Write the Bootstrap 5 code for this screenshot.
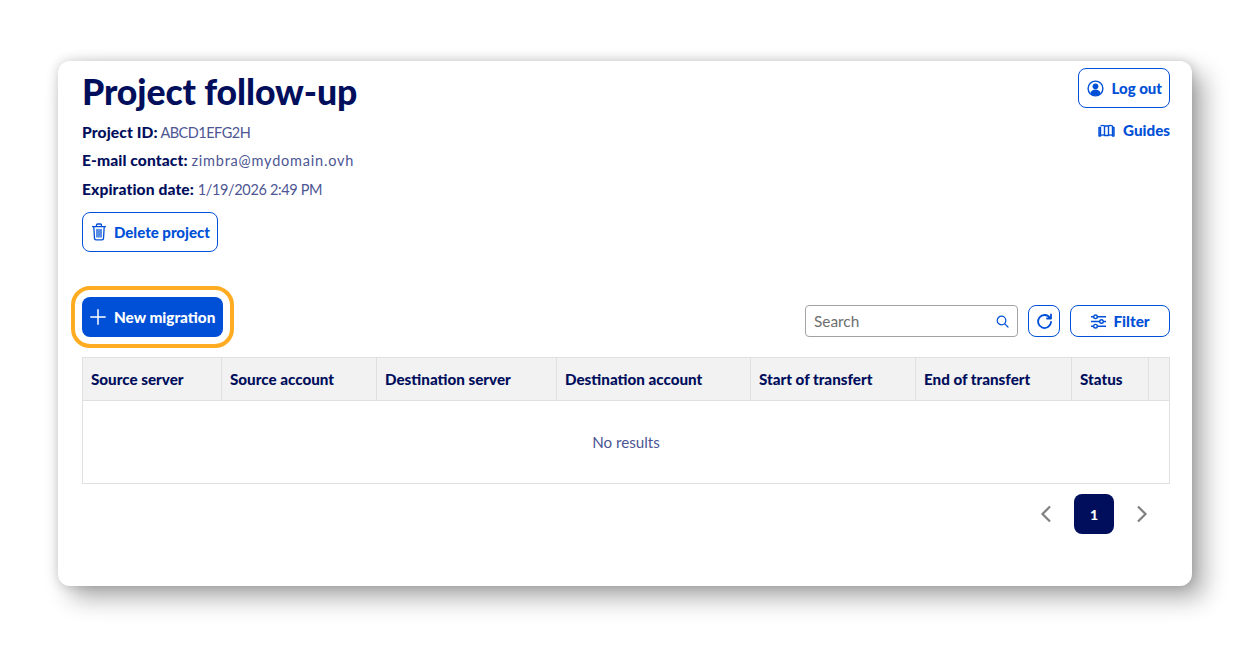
<!DOCTYPE html>
<html lang="en">
<head>
<meta charset="utf-8">
<title>Project follow-up</title>
<link href="https://cdn.jsdelivr.net/npm/bootstrap@5.3.0/dist/css/bootstrap.min.css" rel="stylesheet">
<style>
html,body{height:650px;overflow:hidden;background:#fff}
body{font-family:"Lato","Liberation Sans",sans-serif;font-size:14.5px;color:#4d5693;padding:61px 58px 64px}
.sheet{height:525px;background:#fff;border-radius:12px;box-shadow:12px 12px 24px rgba(0,0,0,.32),0 0 12px rgba(0,0,0,.18);padding:0 22px 0 24px}
.ttl{font-size:35.6px;font-weight:900;color:#000e5c;line-height:44px;margin:9px 0 0;letter-spacing:-.1px}
.infos{margin-top:4px}
.meta{margin:0;line-height:28.4px;height:28.4px;white-space:nowrap}
.meta b{color:#000e5c;font-weight:900;font-size:15.6px;letter-spacing:.1px}
.vid{letter-spacing:-.5px;margin-left:-1px}
.vmail{letter-spacing:.8px}
.vdate{letter-spacing:-.35px}
.oline{display:inline-flex;align-items:center;height:40px;border:1px solid #0050d7;border-radius:8px;color:#0050d7;font-weight:900;font-size:15px;background:#fff;padding:0 7px 0 8px;gap:7px;text-decoration:none}
.oline:hover{color:#0050d7;background:#fff}
.delb{margin-top:9px}
.logb{padding-right:7px;gap:8px}
.guide{display:flex;align-items:center;justify-content:flex-end;gap:8px;color:#0050d7;font-weight:900;font-size:15.2px;text-decoration:none;line-height:20px;margin-top:12px}
.newm{display:inline-flex;align-items:center;height:40px;width:141px;border:0;border-radius:8px;background:#0050d7;color:#fff;font-weight:900;font-size:15.3px;padding:0 0 0 8px;gap:8px;outline:4px solid #ffac22;outline-offset:7.5px}
.newm:hover{background:#0050d7;color:#fff}
.srch{width:213px;height:32px;border:1px solid #a3a3a3;border-radius:4px;padding:0 8px;color:#6e6e6e}
.srch span{font-size:15.4px}
.iconb{width:32px;height:32px;padding:0;justify-content:center}
.filt{width:100px;height:32px;justify-content:center;padding:0;gap:6px;font-size:15.3px}
.tools{gap:10px}
.grid{table-layout:fixed;width:1088px;border-collapse:collapse;margin:20px 0 0}
.grid th{height:43px;background:#f2f2f2;color:#000e5c;font-weight:900;font-size:15.2px;border:1px solid #e0e0e0;padding:0 8px;white-space:nowrap}
.grid td{height:83px;text-align:center;border:1px solid #e0e0e0;color:#4d5693;padding:0;font-size:15.2px}
.pgr{margin-top:10px;gap:18px;padding-right:22px}
.pg1{width:40px;height:40px;border-radius:8px;background:#000e5c;color:#fff;font-weight:900;font-size:14px;display:flex;align-items:center;justify-content:center}
.row2{margin-top:45px}
</style>
</head>
<body>
<main class="sheet">
  <div class="d-flex justify-content-between">
    <div>
      <h1 class="ttl">Project follow-up</h1>
      <div class="infos">
      <p class="meta"><b>Project ID:</b> <span class="vid">ABCD1EFG2H</span></p>
      <p class="meta"><b>E-mail contact:</b> <span class="vmail">zimbra@mydomain.ovh</span></p>
      <p class="meta"><b>Expiration date:</b> <span class="vdate">1/19/2026 2:49 PM</span></p>
      </div>
      <a class="oline delb" href="#">
        <svg width="16" height="18" viewBox="0 0 16 18" fill="none" stroke="#0050d7" stroke-width="1.3" stroke-linecap="round"><path d="M1.500 3.600h13M5.500 3.400V2a1 1 0 0 1 1-1h3a1 1 0 0 1 1 1v1.400M2.800 3.800l.7 11.600a1.500 1.500 0 0 0 1.500 1.400h6a1.500 1.500 0 0 0 1.500-1.400l.7-11.600M6 6.500v7.500M8 6.500v7.500M10 6.500v7.500"/></svg>
        <span>Delete project</span>
      </a>
    </div>
    <div style="padding-top:7px">
      <div class="d-flex justify-content-end">
      <a class="oline logb" href="#">
        <svg width="17" height="17" viewBox="0 0 17 17"><circle cx="8.500" cy="8.500" r="7.400" fill="none" stroke="#0050d7" stroke-width="1.400"/><circle cx="8.500" cy="6.300" r="2.900" fill="#0050d7"/><path d="M3.400 13.400c.6-2.600 2.600-3.800 5.100-3.800s4.500 1.200 5.100 3.800a7 7 0 0 1-10.200 0z" fill="#0050d7"/></svg>
        <span>Log out</span>
      </a>
      </div>
      <a class="guide" href="#">
        <svg width="17" height="13" viewBox="0 0 17 13" fill="none" stroke="#0050d7" stroke-width="1.400" stroke-linejoin="round"><path d="M1 3.500h1.500V12H1zM16 3.500h-1.500V12H16zM2.500 2c1.500-.8 3-.8 4 0v9.500c-1-.8-2.500-.8-4 0M6.500 2h4v9.500h-4M10.500 2c1-.8 2.500-.8 4 0v9.500c-1.500-.8-3-.8-4 0"/></svg>
        <span>Guides</span>
      </a>
    </div>
  </div>
  <div class="row2 d-flex justify-content-between align-items-end">
    <button class="btn newm" type="button">
      <svg width="16" height="16" viewBox="0 0 16 16" stroke="#fff" stroke-width="1.500" stroke-linecap="round"><path d="M8 .8v14.400M.8 8h14.400"/></svg>
      <span>New migration</span>
    </button>
    <div class="tools d-flex align-items-center">
      <div class="srch d-flex align-items-center justify-content-between">
        <span>Search</span>
        <svg width="13" height="13" viewBox="0 0 13 13" fill="none" stroke="#0050d7" stroke-width="1.200" stroke-linecap="round"><circle cx="5.500" cy="5.500" r="4.300"/><path d="M8.800 8.800l3.200 3.200"/></svg>
      </div>
      <a class="oline iconb" href="#" aria-label="Refresh">
        <svg width="17" height="17" viewBox="0 0 17 17" fill="none" stroke="#0050d7" stroke-width="1.800" stroke-linecap="round" stroke-linejoin="round"><path d="M14 5A6.500 6.500 0 1 0 15 9M15 1.500V5.500H11"/></svg>
      </a>
      <a class="oline filt" href="#">
        <svg width="17" height="15" viewBox="0 0 17 15" fill="none" stroke="#0050d7" stroke-width="1.400"><path d="M1 2.800h2.500M7.500 2.800H16M1 7.500h8.500M13.500 7.500H16M1 12.200h2.500M7.500 12.200H16"/><circle cx="5.500" cy="2.800" r="1.800"/><circle cx="11.500" cy="7.500" r="1.800"/><circle cx="5.500" cy="12.200" r="1.800"/></svg>
        <span>Filter</span>
      </a>
    </div>
  </div>
  <table class="grid">
    <colgroup><col style="width:139px"><col style="width:155px"><col style="width:180px"><col style="width:194px"><col style="width:165px"><col style="width:156px"><col style="width:77px"><col></colgroup>
    <thead><tr><th>Source server</th><th>Source account</th><th>Destination server</th><th>Destination account</th><th>Start of transfert</th><th>End of transfert</th><th>Status</th><th></th></tr></thead>
    <tbody><tr><td colspan="8">No results</td></tr></tbody>
  </table>
  <nav class="pgr d-flex justify-content-end align-items-center" aria-label="Pagination">
    <svg width="12" height="18" viewBox="0 0 12 18" fill="none" stroke="#808080" stroke-width="2.200"><path d="M10 1.500 2.500 9l7.500 7.500"/></svg>
    <span class="pg1 mx-1">1</span>
    <svg width="12" height="18" viewBox="0 0 12 18" fill="none" stroke="#808080" stroke-width="2.200"><path d="M2 1.500 9.500 9 2 16.500"/></svg>
  </nav>
</main>
<script src="https://cdn.jsdelivr.net/npm/bootstrap@5.3.0/dist/js/bootstrap.bundle.min.js"></script>
</body>
</html>
